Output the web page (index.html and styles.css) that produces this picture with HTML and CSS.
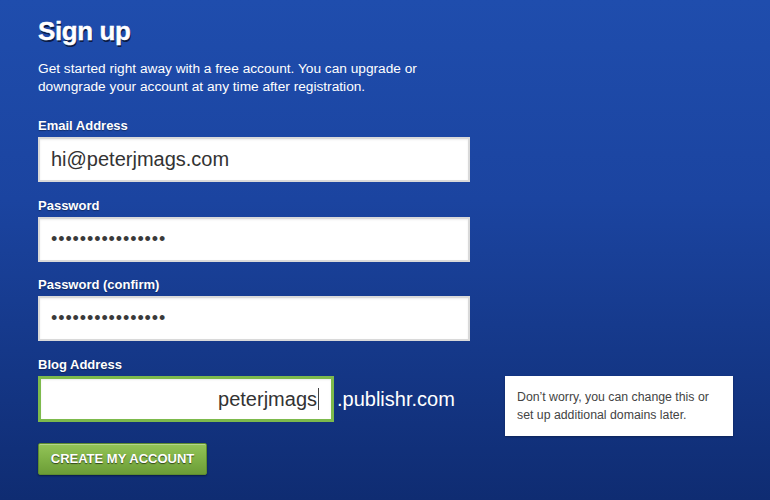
FILE: index.html
```html
<!DOCTYPE html>
<html lang="en">
<head>
<meta charset="utf-8">
<title>Sign up</title>
<link rel="stylesheet" href="styles.css">
</head>
<body>
<main class="page">
  <h1 class="title">Sign up</h1>
  <p class="intro">Get started right away with a free account. You can upgrade or<br>downgrade your account at any time after registration.</p>
  <form class="form">
    <label class="label" for="email">Email Address</label>
    <input class="field" id="email" type="text" value="hi@peterjmags.com">
    <label class="label" for="pw">Password</label>
    <input class="field field-pw" id="pw" type="password" value="aaaaaaaaaaaaaaaa">
    <label class="label" for="pw2">Password (confirm)</label>
    <input class="field field-pw" id="pw2" type="password" value="aaaaaaaaaaaaaaaa">
    <label class="label">Blog Address</label>
    <div class="blog-row">
      <div class="field field-blog"><span class="blog-text">peterjmags</span><span class="caret"></span></div>
      <span class="suffix">.publishr.com</span>
      <div class="hint">Don’t worry, you can change this or<br>set up additional domains later.</div>
    </div>
    <button class="submit" type="button">CREATE MY ACCOUNT</button>
  </form>
</main>
</body>
</html>
```
FILE: styles.css
```css
html, body {
  margin: 0;
  height: 100%;
}
body {
  background: linear-gradient(to bottom, #1f4dad 0%, #1b44a0 40%, #0f2c72 100%);
  font-family: "Liberation Sans", Arial, sans-serif;
  color: #fff;
  overflow: hidden;
}
.page {
  padding: 15px 0 0 38px;
}
.title {
  margin: 0;
  font-size: 26px;
  line-height: 32px;
  font-weight: bold;
  letter-spacing: -0.4px;
  color: #fff;
  text-shadow: 1px 2px 0 #0b1b45;
  -webkit-text-stroke: 0.4px #fff;
}
.intro {
  margin: 13px 0 0;
  font-size: 13.7px;
  line-height: 18px;
  color: #fff;
}
.form {
  display: flex;
  flex-direction: column;
  align-items: flex-start;
  margin-top: 22px;
}
.label {
  display: block;
  font-size: 13px;
  line-height: 16px;
  font-weight: bold;
  color: #fff;
  text-shadow: 0 1px 1px rgba(0,0,0,0.35);
  margin: 0 0 3px;
}
.field {
  box-sizing: border-box;
  width: 432px;
  height: 45px;
  margin: 0 0 15.5px;
  padding: 0 11px;
  border: 2px solid #d9d9d9;
  border-radius: 0;
  background: #fff;
  font-family: "Liberation Sans", Arial, sans-serif;
  font-size: 20px;
  color: #333;
  outline: none;
  box-shadow: inset 0 1px 2px rgba(0,0,0,0.08);
}
.field-pw {
  font-size: 18px;
  letter-spacing: 0.9px;
  color: #3a3a3a;
}
.blog-row {
  display: grid;
  grid-template-columns: 296px 171px 228px;
  align-items: start;
  margin-bottom: 7px;
}
.field-blog {
  width: 296px;
  height: 46px;
  margin: 0;
  border: 3px solid #7dba4c;
  display: flex;
  align-items: center;
  justify-content: flex-end;
  padding: 0 12px 0 0;
}
.blog-text {
  line-height: 24px;
  color: #333;
}
.caret {
  display: inline-block;
  width: 1px;
  height: 22px;
  background: #444;
  margin-left: 1px;
}
.suffix {
  padding-left: 3px;
  font-size: 20px;
  line-height: 46px;
  color: #fff;
}
.hint {
  box-sizing: border-box;
  height: 60px;
  background: #fff;
  padding: 12px 12px 0;
  font-size: 12.3px;
  line-height: 18px;
  color: #444;
  box-shadow: 0 1px 2px rgba(0,0,0,0.3);
}
.submit {
  box-sizing: border-box;
  width: 169px;
  height: 32px;
  padding: 0;
  border: 1px solid #5e8d2f;
  border-radius: 2px;
  background: linear-gradient(to bottom, #93c458 0%, #7fb146 50%, #6c9d37 100%);
  box-shadow: inset 0 1px 0 rgba(255,255,255,0.3), 0 1px 2px rgba(0,0,0,0.4);
  font-family: "Liberation Sans", Arial, sans-serif;
  font-size: 13px;
  font-weight: bold;
  color: #fff;
  text-shadow: 0 1px 1px rgba(0,0,0,0.6);
  cursor: pointer;
}
```
